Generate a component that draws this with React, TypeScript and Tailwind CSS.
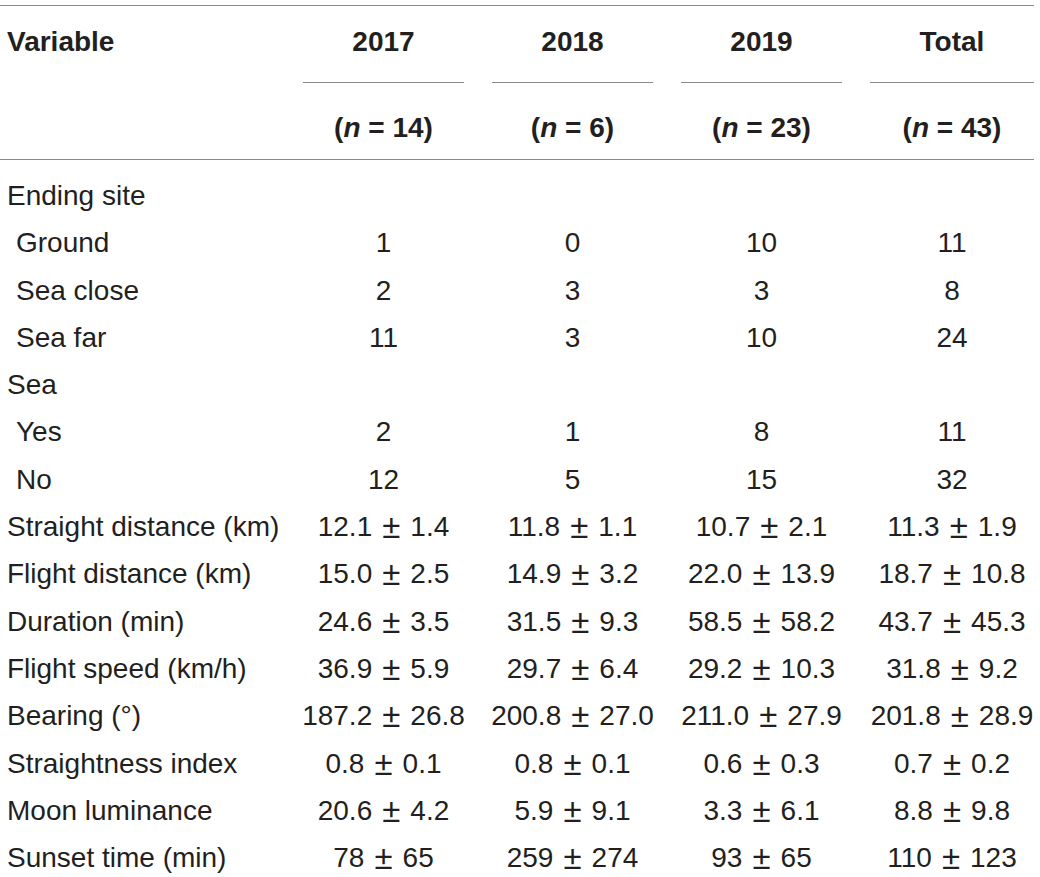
import React from "react";

type Row = { label: string; indent?: boolean; values?: string[] };

const ROWS: Row[] = [
  { label: "Ending site" },
  { label: "Ground", indent: true, values: ["1", "0", "10", "11"] },
  { label: "Sea close", indent: true, values: ["2", "3", "3", "8"] },
  { label: "Sea far", indent: true, values: ["11", "3", "10", "24"] },
  { label: "Sea" },
  { label: "Yes", indent: true, values: ["2", "1", "8", "11"] },
  { label: "No", indent: true, values: ["12", "5", "15", "32"] },
  { label: "Straight distance (km)", values: ["12.1 ± 1.4", "11.8 ± 1.1", "10.7 ± 2.1", "11.3 ± 1.9"] },
  { label: "Flight distance (km)", values: ["15.0 ± 2.5", "14.9 ± 3.2", "22.0 ± 13.9", "18.7 ± 10.8"] },
  { label: "Duration (min)", values: ["24.6 ± 3.5", "31.5 ± 9.3", "58.5 ± 58.2", "43.7 ± 45.3"] },
  { label: "Flight speed (km/h)", values: ["36.9 ± 5.9", "29.7 ± 6.4", "29.2 ± 10.3", "31.8 ± 9.2"] },
  { label: "Bearing (°)", values: ["187.2 ± 26.8", "200.8 ± 27.0", "211.0 ± 27.9", "201.8 ± 28.9"] },
  { label: "Straightness index", values: ["0.8 ± 0.1", "0.8 ± 0.1", "0.6 ± 0.3", "0.7 ± 0.2"] },
  { label: "Moon luminance", values: ["20.6 ± 4.2", "5.9 ± 9.1", "3.3 ± 6.1", "8.8 ± 9.8"] },
  { label: "Sunset time (min)", values: ["78 ± 65", "259 ± 274", "93 ± 65", "110 ± 123"] },
];

const COLS = [
  { year: "2017", n: "14", w: "w-[161px]" },
  { year: "2018", n: "6", w: "w-[161px]" },
  { year: "2019", n: "23", w: "w-[161px]" },
  { year: "Total", n: "43", w: "w-[164px]" },
];

function Value({ text }: { text: string }) {
  const [mean, sd] = text.split(" ± ");
  if (sd === undefined) return <>{text}</>;
  return (
    <>
      {mean}
      <span className="mx-[10px] text-[33px]">±</span>
      {sd}
    </>
  );
}

export default function App() {
  return (
    <div className="w-[1040px] h-[877px] overflow-hidden bg-white pt-[5px] text-[28px] leading-[47.3px] text-[#231f20] font-['Liberation_Sans','Helvetica_Neue',Arial,sans-serif]">
      <div className="w-[1034px] border-t border-[#8a8a8a]">
        {/* header */}
        <div className="border-b border-[#8a8a8a] font-bold">
          <div className="flex gap-[28px]">
            <div className="w-[275px] pl-[7px] pt-[12px]">Variable</div>
            {COLS.map((c) => (
              <div key={c.year} className={`${c.w} h-[77px] border-b border-[#8a8a8a] pt-[12px] flex justify-center`}>
                {c.year}
              </div>
            ))}
          </div>
          <div className="flex gap-[28px] h-[76px]">
            <div className="w-[275px]" />
            {COLS.map((c) => (
              <div key={c.year} className={`${c.w} pt-[21px] flex justify-center whitespace-nowrap`}>
                (<i>n</i>&nbsp;= {c.n})
              </div>
            ))}
          </div>
        </div>

        {/* body */}
        <div className="pt-[12px]">
          {ROWS.map((r) => (
            <div key={r.label} className="flex gap-[28px] h-[47.3px]">
              <div className={`w-[275px] whitespace-nowrap ${r.indent ? "pl-[16px]" : "pl-[7px]"}`}>{r.label}</div>
              {COLS.map((c, i) => (
                <div key={c.year} className={`${c.w} flex justify-center whitespace-nowrap`}>
                  {r.values ? <Value text={r.values[i]} /> : null}
                </div>
              ))}
            </div>
          ))}
        </div>
      </div>
    </div>
  );
}
